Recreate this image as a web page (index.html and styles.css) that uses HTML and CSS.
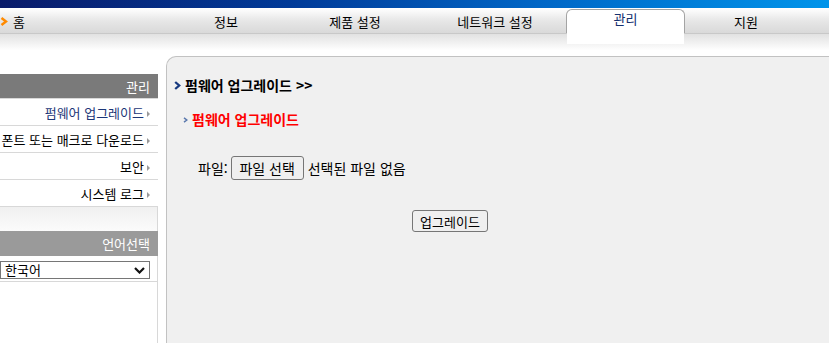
FILE: index.html
```html
<!DOCTYPE html>
<html lang="ko">
<head>
<meta charset="utf-8">
<title>관리</title>
<link rel="stylesheet" href="styles.css">
</head>
<body>
<div class="topstrip"></div>
<nav class="nav">
  <div class="nav-home">
    <svg class="home-arrow" width="8" height="9" viewBox="0 0 8 9"><polyline points="1.5,1 6,4.5 1.5,8" fill="none" stroke="#ff8a00" stroke-width="2.4"/></svg>
    <span>홈</span>
  </div>
  <div class="tab t1">정보</div>
  <div class="tab t2">제품 설정</div>
  <div class="tab t3">네트워크 설정</div>
  <div class="tab t4 active">관리</div>
  <div class="tab t5">지원</div>
</nav>
<div class="subbar"></div>
<div class="main">
  <aside class="side">
    <div class="side-head">관리</div>
    <ul class="menu">
      <li class="current"><span>펌웨어 업그레이드</span><i class="tri"></i></li>
      <li><span>폰트 또는 매크로 다운로드</span><i class="tri"></i></li>
      <li><span>보안</span><i class="tri"></i></li>
      <li><span>시스템 로그</span><i class="tri"></i></li>
    </ul>
    <div class="side-gap"></div>
    <div class="side-head light">언어선택</div>
    <div class="lang">
      <div class="select-wrap">
        <select class="lang-select"><option>한국어</option></select>
        <svg class="select-chev" width="11" height="7" viewBox="0 0 11 7"><polyline points="1,1 5.5,5.5 10,1" fill="none" stroke="#111" stroke-width="2.2"/></svg>
      </div>
    </div>
    <div class="side-rest"></div>
  </aside>
  <section class="panel">
    <div class="title-row">
      <svg class="chev-big" width="7" height="9" viewBox="0 0 7 9"><polyline points="1.2,1 5.2,4.5 1.2,8" fill="none" stroke="#17397f" stroke-width="2.3"/></svg>
      <span>펌웨어 업그레이드 &gt;&gt;</span>
    </div>
    <div class="sub-row">
      <svg class="chev-small" width="5" height="6" viewBox="0 0 5 6"><polyline points="1,0.8 3.8,3 1,5.2" fill="none" stroke="#5a78ad" stroke-width="1.5"/></svg>
      <span>펌웨어 업그레이드</span>
    </div>
    <div class="file-row">
      <span>파일:</span>
      <span class="btn btn-file">파일 선택</span>
      <span>선택된 파일 없음</span>
    </div>
    <div class="upgrade-row">
      <span class="btn btn-up">업그레이드</span>
    </div>
  </section>
</div>
</body>
</html>
```
FILE: styles.css
```css
html, body {
  margin: 0;
  padding: 0;
}
body {
  width: 829px;
  height: 343px;
  overflow: hidden;
  background: #ffffff;
  font-family: "Noto Sans CJK KR", "Noto Sans", sans-serif;
  color: #000;
}
.topstrip {
  height: 8px;
  background: linear-gradient(to right, #0a1b6a 0%, #003a98 35%, #0066c6 65%, #0094ea 100%);
}
.nav {
  display: flex;
  height: 25px;
  border-bottom: 1px solid #c8c8c8;
  background: linear-gradient(#ffffff 0%, #f6f6f6 20%, #e9e9e9 45%, #e1e1e1 70%, #d9d9d9 100%);
  font-size: 13px;
  line-height: 17px;
}
.nav-home {
  width: 166px;
  display: flex;
  align-items: center;
  gap: 5px;
  padding-top: 1px;
  box-sizing: border-box;
}
.home-arrow {
  display: block;
  margin-top: 1px;
}
.tab {
  display: flex;
  justify-content: center;
  align-items: center;
  padding-top: 1px;
  box-sizing: border-box;
}
.t1 { width: 120px; }
.t2 { width: 138px; }
.t3 { width: 142px; }
.t4 { width: 119px; }
.t5 { width: 122px; }
.tab.active {
  position: relative;
  margin-top: 1px;
  background: #ffffff;
  border: 1px solid #a4a4a4;
  border-bottom: none;
  border-radius: 6px 6px 0 0;
  align-items: flex-start;
  padding-top: 0;
  color: #14306e;
}
.tab.active::after {
  content: "";
  position: absolute;
  left: 0;
  right: 0;
  top: 100%;
  height: 11px;
  background: #ffffff;
}
.subbar {
  height: 22px;
  background: linear-gradient(#e1e1e1 0%, #f3f3f3 45%, #ffffff 75%);
}
.main {
  display: flex;
  gap: 8px;
  height: 287px;
}
.side {
  width: 158px;
  flex: none;
  display: flex;
  flex-direction: column;
  padding-top: 18px;
  box-sizing: border-box;
  font-size: 13px;
  line-height: 17px;
}
.side-head {
  height: 24px;
  background: #7a7a7a;
  color: #ffffff;
  display: flex;
  justify-content: flex-end;
  align-items: center;
  padding-right: 8px;
}
.side-head.light {
  height: 25px;
  background: #9a9a9a;
}
.menu {
  list-style: none;
  margin: 0;
  padding: 0;
}
.menu li {
  height: 26px;
  border-top: 1px solid #d8d8d8;
  display: flex;
  justify-content: flex-end;
  align-items: center;
  gap: 3px;
  padding-right: 8px;
  white-space: nowrap;
}
.menu li.current {
  color: #1b3677;
}
.tri {
  display: block;
  flex: none;
  width: 0;
  height: 0;
  border-left: 3px solid #9a9a9a;
  border-top: 3px solid transparent;
  border-bottom: 3px solid transparent;
  margin-top: 3px;
}
.side-gap {
  height: 24px;
  border-top: 1px solid #d8d8d8;
  border-right: 1px solid #d8d8d8;
  background: linear-gradient(#f0f0f0, #fbfbfb);
}
.lang {
  height: 26px;
  border-bottom: 1px solid #d8d8d8;
  border-right: 1px solid #d8d8d8;
  padding-top: 5px;
  box-sizing: border-box;
}
.select-wrap {
  position: relative;
  width: 150px;
  height: 18px;
}
.lang-select {
  appearance: none;
  -webkit-appearance: none;
  width: 150px;
  height: 18px;
  margin: 0;
  padding: 0 0 0 4px;
  border: 1px solid #767676;
  border-radius: 0;
  background: #ffffff;
  font-family: "Noto Sans CJK KR", sans-serif;
  font-size: 13px;
  line-height: 16px;
  color: #000;
  display: block;
}
.select-chev {
  position: absolute;
  right: 5px;
  top: 6px;
  pointer-events: none;
}
.side-rest {
  flex: 1;
  border-right: 1px solid #d8d8d8;
}
.panel {
  flex: 1;
  background: #f0f0f0;
  border-top: 1px solid #c2c2c2;
  border-left: 1px solid #c2c2c2;
  border-top-left-radius: 10px;
  padding: 19px 0 0 7px;
  box-sizing: border-box;
  font-size: 14px;
  line-height: 19px;
}
.title-row {
  display: flex;
  align-items: center;
  gap: 4px;
  font-weight: bold;
}
.sub-row {
  display: flex;
  align-items: center;
  gap: 4px;
  margin-top: 15px;
  padding-left: 9px;
  color: #ff0000;
  font-weight: bold;
}
.file-row {
  display: flex;
  align-items: center;
  gap: 3px;
  margin-top: 27px;
  padding-left: 24px;
  height: 24px;
}
.file-row .btn-file {
  margin-right: 1px;
}
.btn {
  display: inline-flex;
  align-items: center;
  justify-content: center;
  box-sizing: border-box;
  border: 1px solid #767676;
  border-radius: 3px;
  background: #efefef;
  color: #000;
}
.btn-file {
  width: 73px;
  height: 24px;
}
.upgrade-row {
  margin-top: 30px;
  padding-left: 238px;
}
.btn-up {
  width: 76px;
  height: 22px;
  font-size: 13px;
}
```
